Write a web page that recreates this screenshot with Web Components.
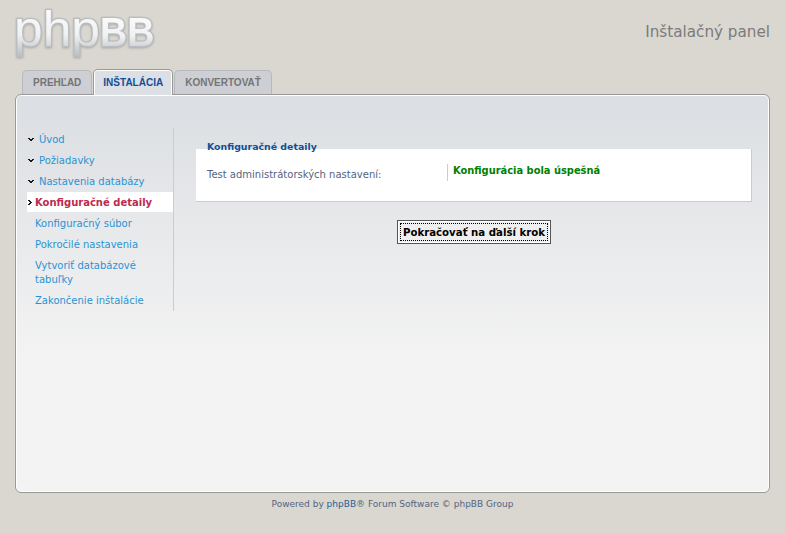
<!DOCTYPE html>
<html lang="sk">
<head>
<meta charset="utf-8">
<title>Inštalačný panel</title>
<style>
  html, body { margin: 0; padding: 0; }
  body { background: #dad7d0; font-family: "DejaVu Sans", sans-serif; }
</style>
</head>
<body>
<acp-page>
  <acp-header slot="header" title="Inštalačný panel"></acp-header>
  <acp-tabs slot="tabs">
    <acp-tab>PREHĽAD</acp-tab>
    <acp-tab active>INŠTALÁCIA</acp-tab>
    <acp-tab>KONVERTOVAŤ</acp-tab>
  </acp-tabs>
  <acp-menu slot="menu">
    <acp-menu-item state="done">Úvod</acp-menu-item>
    <acp-menu-item state="done">Požiadavky</acp-menu-item>
    <acp-menu-item state="done">Nastavenia databázy</acp-menu-item>
    <acp-menu-item state="active">Konfiguračné detaily</acp-menu-item>
    <acp-menu-item>Konfiguračný súbor</acp-menu-item>
    <acp-menu-item>Pokročilé nastavenia</acp-menu-item>
    <acp-menu-item>Vytvoriť databázové tabuľky</acp-menu-item>
    <acp-menu-item>Zakončenie inštalácie</acp-menu-item>
  </acp-menu>
  <acp-fieldset legend="Konfiguračné detaily">
    <acp-row label="Test administrátorských nastavení:">Konfigurácia bola úspešná</acp-row>
  </acp-fieldset>
  <acp-submit>Pokračovať na ďalší krok</acp-submit>
  <acp-footer slot="footer"></acp-footer>
</acp-page>

<script>
class AcpPage extends HTMLElement {
  constructor() {
    super();
    this.attachShadow({ mode: 'open' });
    this.shadowRoot.innerHTML = `
      <style>
        :host { display: block; height: 534px; padding: 0 15px; box-sizing: border-box; }
        .panel {
          height: 399px;
          box-sizing: border-box;
          border: 1px solid #999;
          border-radius: 6px;
          background: linear-gradient(#dcdfe3 0, #dcdfe3 12px, #f3f3f3 262px, #f3f3f3 100%);
          box-shadow: inset 0 0 0 1px #fff;
          padding: 33px 17px 0 11px;
          display: flex;
          margin-top: -1px;
          position: relative;
        }
        .main { flex: 1; padding-left: 22px; min-width: 0; }
      </style>
      <slot name="header"></slot>
      <slot name="tabs"></slot>
      <div class="panel">
        <slot name="menu"></slot>
        <div class="main"><slot></slot></div>
      </div>
      <slot name="footer"></slot>`;
  }
}

class AcpHeader extends HTMLElement {
  constructor() {
    super();
    this.attachShadow({ mode: 'open' });
    this.shadowRoot.innerHTML = `
      <style>
        :host { display: flex; justify-content: space-between; height: 70px; }
        svg { display: block; margin-top: 4px; overflow: visible; }
        h1 { margin: 22px 0 0; font: normal 15.2px/20px "DejaVu Sans", sans-serif; color: #7b7b7b; }
      </style>
      <svg width="142" height="56" viewBox="0 0 142 56">
        <defs>
          <linearGradient id="steel" x1="0" y1="0" x2="0" y2="1">
            <stop offset="0" stop-color="#ffffff"/>
            <stop offset=".6" stop-color="#f0f1f2"/>
            <stop offset="1" stop-color="#b9bdc1"/>
          </linearGradient>
          <filter id="drop" x="-5%" y="-5%" width="110%" height="120%">
            <feDropShadow dx="0" dy="1" stdDeviation="1" flood-color="#888" flood-opacity=".6"/>
          </filter>
        </defs>
        <g filter="url(#drop)" fill="url(#steel)" stroke="#b9bcc0" stroke-width="2.4" paint-order="stroke">
          <text transform="translate(-1 42) scale(1.03 1)" font-family="Liberation Sans, sans-serif" font-size="50">php</text>
          <text transform="translate(85 42) scale(.92 1)" font-family="Liberation Sans, sans-serif" font-size="41" font-weight="700">BB</text>
        </g>
      </svg>
      <h1></h1>`;
    this.shadowRoot.querySelector('h1').textContent = this.getAttribute('title');
  }
}

class AcpTabs extends HTMLElement {
  constructor() {
    super();
    this.attachShadow({ mode: 'open' });
    this.shadowRoot.innerHTML = `
      <style>
        :host { display: flex; gap: 1px; height: 25px; padding-left: 7px; position: relative; z-index: 1; }
      </style>
      <slot></slot>`;
  }
}

class AcpTab extends HTMLElement {
  constructor() {
    super();
    this.attachShadow({ mode: 'open' });
    this.shadowRoot.innerHTML = `
      <style>
        :host {
          display: block;
          box-sizing: border-box;
          height: 24px;
          padding: 5px 10px 0;
          font: bold 10px/14px "Liberation Sans", Arial, sans-serif;
          color: #757575;
          background: #cdcfd4;
          border: 1px solid #b8b9bc;
          border-bottom: 0;
          border-radius: 5px 5px 0 0;
          white-space: nowrap;
        }
        :host([active]) {
          height: 26px;
          margin-top: -1px;
          padding: 6px 9px 0;
          color: #115098;
          background: #dcdfe3;
          border-color: #999;
          box-shadow: inset 0 1px 0 #fff, inset 1px 0 0 #fff, inset -1px 0 0 #fff;
        }
      </style>
      <slot></slot>`;
  }
}

class AcpMenu extends HTMLElement {
  constructor() {
    super();
    this.attachShadow({ mode: 'open' });
    this.shadowRoot.innerHTML = `
      <style>
        :host {
          display: block;
          width: 147px;
          height: 183px;
          box-sizing: border-box;
          border-right: 1px solid #ccc;
          padding-top: 2px;
        }
      </style>
      <slot></slot>`;
  }
}

const bullets = {
  done: '<path d="M0 0h2v1H0zM4 0h2v1H4zM1 1h4v1H1zM2 2h2v1H2z" fill="#1a1a1a"/>',
  active: '<path d="M0 0h2v1H0zM1 1h2v1H1zM2 2h2v1H2zM1 3h2v1H1zM0 4h2v1H0z" fill="#1a1a1a"/>'
};

class AcpMenuItem extends HTMLElement {
  constructor() {
    super();
    this.attachShadow({ mode: 'open' });
    const state = this.getAttribute('state');
    this.shadowRoot.innerHTML = `
      <style>
        :host {
          display: block;
          position: relative;
          padding: 3px 10px 3px 8px;
          font: 10px/14px "DejaVu Sans", sans-serif;
          color: #2b93d3;
          margin-bottom: 1px;
        }
        :host([state="done"]) { padding-left: 12px; }
        :host([state="active"]) {
          background: #fff;
          color: #bc2a4d;
          font-weight: bold;
          margin-top: -1px;
          margin-bottom: 2px;
          padding-top: 4px;
          padding-bottom: 2px;
        }
        svg { position: absolute; left: 1px; top: 8px; }
      </style>
      ${state ? `<svg width="6" height="5" aria-hidden="true">${bullets[state]}</svg>` : ''}
      <slot></slot>`;
  }
}

class AcpFieldset extends HTMLElement {
  constructor() {
    super();
    this.attachShadow({ mode: 'open' });
    this.shadowRoot.innerHTML = `
      <style>
        :host {
          display: block;
          position: relative;
          box-sizing: border-box;
          height: 53px;
          margin-top: 21px;
          background: #fff;
          border-right: 1px solid #ccc;
          border-bottom: 1px solid #ccc;
          padding: 15px 10px 0 11px;
        }
        .legend {
          position: absolute;
          left: 11px;
          top: -9px;
          font: bold 9.4px/14px "DejaVu Sans", sans-serif;
          color: #115098;
        }
      </style>
      <div class="legend"></div>
      <slot></slot>`;
    this.shadowRoot.querySelector('.legend').textContent = this.getAttribute('legend');
  }
}

class AcpRow extends HTMLElement {
  constructor() {
    super();
    this.attachShadow({ mode: 'open' });
    this.shadowRoot.innerHTML = `
      <style>
        :host { display: flex; font: 10px/14px "DejaVu Sans", sans-serif; }
        .label { width: 240px; flex: none; padding-top: 4px; color: #536482; }
        .value {
          border-left: 1px solid #ccc;
          height: 17px;
          padding-left: 5px;
          font: bold 9.9px/14px "DejaVu Sans", sans-serif;
          color: #008000;
        }
      </style>
      <div class="label"></div>
      <div class="value"><slot></slot></div>`;
    this.shadowRoot.querySelector('.label').textContent = this.getAttribute('label');
  }
}

class AcpSubmit extends HTMLElement {
  constructor() {
    super();
    this.attachShadow({ mode: 'open' });
    this.shadowRoot.innerHTML = `
      <style>
        :host { display: flex; justify-content: center; margin-top: 18px; }
        button {
          box-sizing: border-box;
          width: 154px;
          height: 24px;
          padding: 0;
          border: 1px solid #555;
          background: #efefef;
          box-shadow: inset 0 0 0 1px #fff;
          color: #000;
          font: bold 10.2px/1 "DejaVu Sans", sans-serif;
          position: relative;
        }
        span {
          display: block;
          margin: 2px;
          height: 18px;
          padding-top: 1px;
          line-height: 15px;
          box-sizing: border-box;
          border: 1px dotted #000;
          white-space: nowrap;
        }
      </style>
      <button type="button"><span><slot></slot></span></button>`;
  }
}

class AcpFooter extends HTMLElement {
  constructor() {
    super();
    this.attachShadow({ mode: 'open' });
    this.shadowRoot.innerHTML = `
      <style>
        :host {
          display: block;
          padding-top: 4px;
          text-align: center;
          font: 9px/14px "DejaVu Sans", sans-serif;
          color: #536482;
        }
        a { color: #1f5f96; text-decoration: none; }
      </style>
      Powered by <a href="#">phpBB</a>® Forum Software © phpBB Group`;
  }
}

customElements.define('acp-page', AcpPage);
customElements.define('acp-header', AcpHeader);
customElements.define('acp-tabs', AcpTabs);
customElements.define('acp-tab', AcpTab);
customElements.define('acp-menu', AcpMenu);
customElements.define('acp-menu-item', AcpMenuItem);
customElements.define('acp-fieldset', AcpFieldset);
customElements.define('acp-row', AcpRow);
customElements.define('acp-submit', AcpSubmit);
customElements.define('acp-footer', AcpFooter);
</script>
</body>
</html>
